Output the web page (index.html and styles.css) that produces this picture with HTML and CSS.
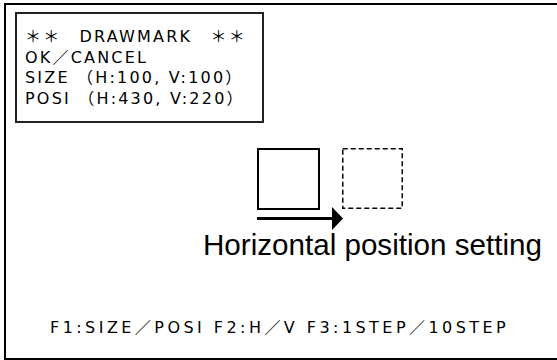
FILE: index.html
```html
<!DOCTYPE html>
<html lang="en">

<head>
    <meta charset="UTF-8">
    <title>Drawmark</title>
    <link rel="stylesheet" href="styles.css">
</head>

<body>

    <div class="screen">
        <div class="info">
            <div class="line">＊＊　DRAWMARK　＊＊</div>
            <div class="line">OK／CANCEL</div>
            <div class="line">SIZE （H:100, V:100）</div>
            <div class="line">POSI （H:430, V:220）</div>
        </div>

        <svg class="diagram" width="150" height="86" viewBox="0 0 150 86">
            <!-- current mark -->
            <rect x="3" y="5" width="61" height="60" fill="none" stroke="#000" stroke-width="2" />
            <!-- moved mark -->
            <rect x="87.75" y="4.75" width="59.5" height="59.5" fill="none" stroke="#000" stroke-width="1.5" stroke-dasharray="5 3" />
            <line x1="2" y1="74.5" x2="79" y2="74.5" stroke="#000" stroke-width="3" />
            <polygon points="77,63 88,74.5 77,86" fill="#000" />
        </svg>

        <div class="caption">Horizontal position setting</div>

        <div class="keys">F1:SIZE／POSI F2:H／V F3:1STEP／10STEP</div>
    </div>

</body>

</html>
```

FILE: styles.css
```css
html {
    background-color: #fff;
}

body {
    margin: 0;
    overflow: hidden;
    color: #000;
    font-family: 'Liberation Sans', 'Noto Sans CJK JP', sans-serif;
}

.screen {
    margin: 3px 0 0 4px;
    width: 560px;
    height: 353px;
    border: solid #000;
    border-width: 2px 0 2px 2px;
}

.info {
    box-sizing: border-box;
    width: 249px;
    height: 111px;
    margin: 7px 0 0 9px;
    padding: 13px 0 0 8px;
    border: 2px solid #222;
}

.line {
    font-family: 'DejaVu Sans', 'Noto Sans CJK JP', sans-serif;
    font-size: 16px;
    line-height: 20.5px;
    letter-spacing: 2.2px;
    white-space: nowrap;
}

.diagram {
    display: block;
    margin: 21px 0 0 249px;
}

.caption {
    padding-left: 197px;
    font-size: 29.6px;
    line-height: 30px;
    white-space: nowrap;
}

.keys {
    margin-top: 58px;
    padding-left: 44px;
    font-family: 'DejaVu Sans', 'Noto Sans CJK JP', sans-serif;
    font-size: 16px;
    line-height: 20px;
    letter-spacing: 3.45px;
    white-space: nowrap;
}
```
